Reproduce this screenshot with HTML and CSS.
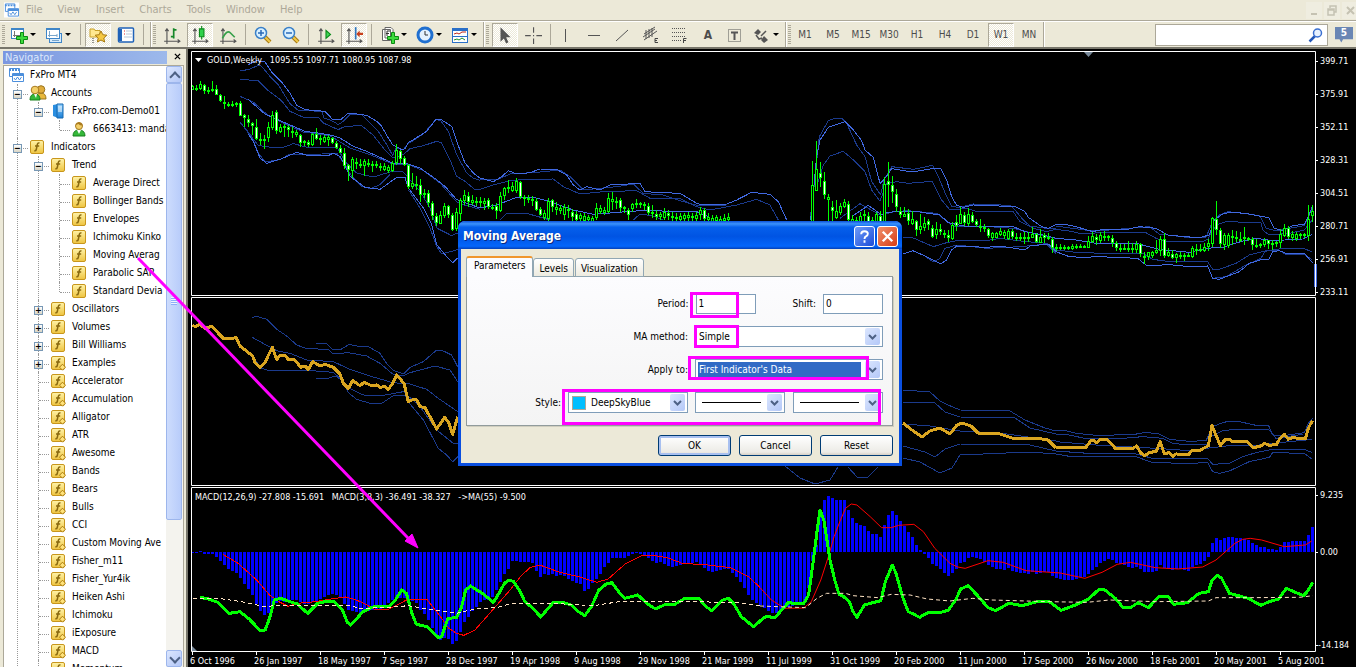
FILE: index.html
```html
<!DOCTYPE html>
<html lang="en">
<head>
<meta charset="utf-8">
<title>FxPro MT4</title>
<link rel="stylesheet" href="styles.css">
</head>
<body>
<svg class="defs" aria-hidden="true">
  <defs>
    <linearGradient id="gold" x1="0" y1="0" x2="0" y2="1"><stop offset="0" stop-color="#fff3a8"/><stop offset="1" stop-color="#eec440"/></linearGradient>
    <linearGradient id="blue" x1="0" y1="0" x2="0" y2="1"><stop offset="0" stop-color="#8fd0ff"/><stop offset="1" stop-color="#1b7fd6"/></linearGradient>
    <symbol id="fx" viewBox="0 0 16 16"><rect x="1.500" y="1.500" width="13" height="13" rx="1.500" fill="url(#gold)" stroke="#c8961c"/><path d="M10.500 4.200Q8.800 3.300 8.300 5.500L7.300 10.500Q7 12 5.300 11.700M6 7H10.200" fill="none" stroke="#8a6a10" stroke-width="1.500"/></symbol>
    <symbol id="fxc" viewBox="0 0 16 16"><use href="#fx"/><path d="M12.500 9.200l3 3-3 3-3-3z" fill="#ffe27a" stroke="#a87a10"/></symbol>
    <symbol id="app" viewBox="0 0 16 16"><path d="M1.500 1.500h10v8h-10z" fill="#fff" stroke="#4c8fdc"/><path d="M1 3h11" stroke="#4c8fdc" stroke-width="2" stroke-dasharray="2 1"/><path d="M4.500 6.500h11v8h-11z" fill="#fff" stroke="#4c8fdc"/><path d="M4 8h12" stroke="#4c8fdc" stroke-width="2"/><path d="M6 11l1.500 2 2-3 2 3 2-3" fill="none" stroke="#4c8fdc"/></symbol>
    <symbol id="man" viewBox="0 0 16 16"><path d="M2 15q0-6 6-6t6 6z" fill="#35b83a" stroke="#16801d"/><path d="M6 9h4l-2 4z" fill="#fff"/><circle cx="8" cy="5" r="3.500" fill="#f3cf68" stroke="#a87a20"/><path d="M4.500 4q1-3 4-2.500t3 3q-3 0-4-1.500z" fill="#a87a20"/></symbol>
    <symbol id="men" viewBox="0 0 18 16"><path d="M7 14q0-6 5-6t5 6z" fill="#e8b83c" stroke="#9a741c"/><circle cx="12" cy="4.500" r="3.800" fill="#e0ac3c" stroke="#9a741c"/><path d="M1 15q0-6 5-6t5 6z" fill="#35b83a" stroke="#16801d"/><path d="M5 9h3l-1 4z" fill="#fff"/><circle cx="6" cy="5" r="3.800" fill="#f3cf68" stroke="#a87a20"/></symbol>
    <symbol id="server" viewBox="0 0 16 16"><path d="M3 2l5-1v14l-5-2z" fill="#2a8ee0"/><path d="M7 1h6v14H7z" fill="url(#blue)" stroke="#1668b0"/><path d="M8 4h4M8 6h4M8 8h4" stroke="#fff"/></symbol>
    <symbol id="axes" viewBox="0 0 16 16"><path d="M3.500 2v14M1 13.500h14M2 4.500l1.500-2 1.500 2M13 12l2 1.500-2 1.500" fill="none" stroke="#555"/></symbol>
    <symbol id="plus" viewBox="0 0 16 16"><path d="M9.500 5.500h3v4h4v3h-4v4h-3v-4h-4v-3h4z" fill="#3ddb3d" stroke="#0b8a12" transform="translate(-1 -1)"/></symbol>
    <symbol id="glass" viewBox="0 0 18 18"><path d="M11 11l5 5" stroke="#a87a10" stroke-width="4"/><path d="M11 11l5 5" stroke="#f0c848" stroke-width="2"/><circle cx="7" cy="7" r="5.500" fill="#d8f0ff" stroke="#3a80c8" stroke-width="1.500"/></symbol>
  </defs>
</svg>

<header>
  <nav class="menubar" aria-label="Menu">
    <svg class="logo" viewBox="0 0 16 16"><rect width="16" height="16" fill="#fff"/><use href="#app"/></svg>
    <button>File</button><button>View</button><button>Insert</button><button>Charts</button><button>Tools</button><button>Window</button><button>Help</button>
    <div class="winbtns">
      <button aria-label="Minimize"><svg viewBox="0 0 14 16"><path d="M4 12h6" stroke="#c5c2b2" stroke-width="2"/></svg></button>
      <button aria-label="Restore"><svg viewBox="0 0 14 16"><path d="M5 6V4h6v6H9M3 7h6v6H3zM3 8h6M5 4h6" fill="none" stroke="#c5c2b2" stroke-width="1.500"/></svg></button>
      <button aria-label="Close"><svg viewBox="0 0 14 16"><path d="M4 5l7 7M11 5l-7 7" stroke="#c5c2b2" stroke-width="2"/></svg></button>
    </div>
  </nav>
  <div class="toolbars">
    <div class="toolbar">
      <button class="drop" aria-label="New chart"><svg viewBox="0 0 18 18"><rect x="1.500" y="2.500" width="12" height="10" fill="#fff" stroke="#3f86c8"/><path d="M1 3h13" stroke="#3f86c8" stroke-width="2"/><path d="M4.500 5v6M3 9.500h8" stroke="#777"/><use href="#plus" x="2" y="2" width="16" height="16"/></svg></button>
      <button class="drop" aria-label="Profiles"><svg viewBox="0 0 18 18"><rect x="4.500" y="7.500" width="12" height="9" fill="#d8ecfc" stroke="#3f86c8"/><rect x="1.500" y="2.500" width="13" height="10" fill="#fff" stroke="#3f86c8"/><path d="M1 3h14" stroke="#3f86c8" stroke-width="2"/><path d="M4.500 5v6M3 9.500h9M12 8v3M7 14.500h7" stroke="#7ba7cc"/></svg></button>
      <i class="sep"></i>
      <button class="on" aria-label="Navigator"><svg viewBox="0 0 18 18"><path d="M1 3h4l1 1.500h5V11H1z" fill="#ffe890" stroke="#c8a028"/><path d="M4 12v5" stroke="#333" stroke-dasharray="1 1"/><path d="M12 5l1.800 3.700 4 .500-3 2.800.800 4-3.600-2-3.600 2 .800-4-3-2.800 4-.500z" fill="#f5c842" stroke="#a87a10"/></svg></button>
      <button aria-label="Data window"><svg viewBox="0 0 18 18"><rect x="1.500" y="2" width="15" height="14" rx="1" fill="#fff" stroke="#1f62b8" stroke-width="1.500"/><path d="M3.500 3v12" stroke="#1f62b8" stroke-width="3"/><path d="M7 5h1M7 8h1" stroke="#d22"/><path d="M9 5h6M9 8h6M7 11h8" stroke="#b8c8d8"/></svg></button>
      <i class="sep last"></i>
    </div>
    <div class="toolbar">
      <button aria-label="Bar chart"><svg viewBox="0 0 16 16"><use href="#axes"/><path d="M9.500 2v9M9 3.500h3M7 9.500h3" stroke="#17882a" stroke-width="1.500"/></svg></button>
      <button class="on" aria-label="Candlesticks"><svg viewBox="0 0 16 16"><use href="#axes"/><path d="M9.500 0v12" stroke="#0a8a1a"/><path d="M7.500 2.500h4v7h-4z" fill="#2fd14a" stroke="#0a8a1a"/></svg></button>
      <button aria-label="Line chart"><svg viewBox="0 0 16 16"><use href="#axes"/><path d="M3 11q4-8 7-5 2 2 4 4" fill="none" stroke="#37a04a" stroke-width="1.500"/></svg></button>
      <i class="sep"></i>
      <button aria-label="Zoom in"><svg viewBox="0 0 18 18"><use href="#glass"/><path d="M4 7h6M7 4v6" stroke="#2a6ab8" stroke-width="1.500"/></svg></button>
      <button aria-label="Zoom out"><svg viewBox="0 0 18 18"><use href="#glass"/><path d="M4 7h6" stroke="#2a6ab8" stroke-width="1.500"/></svg></button>
      <i class="sep"></i>
      <button aria-label="Auto scroll"><svg viewBox="0 0 16 16"><use href="#axes"/><path d="M8 4l4 3.500L8 11z" fill="#3fd455" stroke="#0a8a1a"/></svg></button>
      <button class="on" aria-label="Chart shift"><svg viewBox="0 0 16 16"><use href="#axes"/><path d="M9.500 1v11" stroke="#2f78c0" stroke-width="1.500"/><path d="M10 7l3-3v2h3v2h-3v2z" fill="#c8401c"/></svg></button>
      <i class="sep wide"></i>
      <button class="drop" aria-label="Indicators"><svg viewBox="0 0 18 18"><path d="M1.500 3.500h8v11h-8zM4 1.500h6l2 2V12H4z" fill="#fff" stroke="#666"/><path d="M6 10V5h3M5 7.500h3" fill="none" stroke="#333"/><use href="#plus" x="2" y="2" width="16" height="16"/></svg></button>
      <button class="drop" aria-label="Periods"><svg viewBox="0 0 18 18"><circle cx="9" cy="9" r="7" fill="#e4f2ff" stroke="#1f6fd0" stroke-width="3"/><path d="M9 5v4h3" fill="none" stroke="#333"/></svg></button>
      <button class="drop" aria-label="Templates"><svg viewBox="0 0 18 18"><rect x="1.500" y="2.500" width="15" height="14" fill="#fff" stroke="#2a6fc8"/><path d="M1 3.500h16" stroke="#2a6fc8" stroke-width="3"/><path d="M1 10.500h16" stroke="#2a6fc8"/><path d="M3 8l3-1 2 1 3-2h4" fill="none" stroke="#c02818"/><path d="M3 14l3-1 2 1 3-2 3 2" fill="none" stroke="#1c9030"/></svg></button>
    </div>
    <div class="toolbar">
      <button class="on" aria-label="Cursor"><svg viewBox="0 0 16 16"><path d="M4 1v13l3-3 2 4.500 2-1L9 10h4z" fill="#555"/></svg></button>
      <button aria-label="Crosshair"><svg viewBox="0 0 16 16"><path d="M8.500 1v5M8.500 11v5M1 8.500h5M11 8.500h5M8 8.500h1" stroke="#555"/></svg></button>
      <i class="sep"></i>
      <button aria-label="Vertical line"><svg viewBox="0 0 18 18"><path d="M6.500 3v13" stroke="#555"/></svg></button>
      <button aria-label="Horizontal line"><svg viewBox="0 0 18 18"><path d="M1 9.500h12" stroke="#555"/></svg></button>
      <button aria-label="Trendline"><svg viewBox="0 0 18 18"><path d="M1 15L13 4" stroke="#555"/></svg></button>
      <button aria-label="Channel"><svg viewBox="0 0 18 18"><path d="M1 8L12 1M1 14L14 5M3 4v9M6 3v9M9 2v9M0 11l12-8" stroke="#555"/><path d="M15 12.500h-3v4h3M12 14.500h2" fill="none" stroke="#444"/></svg></button>
      <button aria-label="Fibonacci"><svg viewBox="0 0 18 18"><path d="M1 2.500h13M1 6.500h13M1 10.500h13M1 14.500h9" stroke="#555" stroke-dasharray="1 1"/><path d="M12.500 17v-4.500h3M12 14.500h3" fill="none" stroke="#444"/></svg></button>
      <button aria-label="Text"><b>A</b></button>
      <button aria-label="Text label"><svg viewBox="0 0 18 18"><rect x="1.500" y="3.500" width="12" height="12" fill="none" stroke="#555" stroke-dasharray="1 1"/><path d="M4 6.500h7M7.500 6v8" stroke="#555" stroke-width="2"/></svg></button>
      <button class="drop" aria-label="Arrows"><svg viewBox="0 0 18 18"><path d="M1 7l4-4 3 3-3 3zM8 14l3-4 4 4-4 3z" fill="#555"/><path d="M8 10l5-5M3 9l3 4 3-1" fill="none" stroke="#555" stroke-width="1.500"/></svg></button>
    </div>
    <div class="toolbar periods">
      <button>M1</button><button>M5</button><button>M15</button><button>M30</button><button>H1</button><button>H4</button><button>D1</button><button class="on">W1</button><button>MN</button>
    </div>
    <div class="search">
      <input type="search" aria-label="Search">
      <svg viewBox="0 0 16 16"><path d="M1.500 14.500L7 9" stroke="#2458b8" stroke-width="2.500"/><circle cx="9.500" cy="6" r="4" fill="#e8f2ff" stroke="#3a6fd0" stroke-width="1.500"/></svg>
      <button class="msgs">5</button>
    </div>
  </div>
</header>

<main>
  <aside class="navigator">
    <div class="navhead"><h2>Navigator</h2><button aria-label="Close navigator"><svg viewBox="0 0 8 8"><path d="M1 1l6 6M7 1L1 7" stroke="#000" stroke-width="1.500"/></svg></button></div>
    <div class="navbody">
      <ul class="tree">
        <li><span class="row"><svg><use href="#app"/></svg>FxPro MT4</span>
          <ul>
            <li><button class="tg">−</button><span class="row"><svg class="wide"><use href="#men"/></svg>Accounts</span>
              <ul><li class="end"><button class="tg">−</button><span class="row"><svg><use href="#server"/></svg>FxPro.com-Demo01</span>
                <ul><li class="end"><span class="row"><svg><use href="#man"/></svg>6663413: mandarin</span></li></ul></li></ul></li>
            <li><button class="tg">−</button><span class="row"><svg><use href="#fx"/></svg>Indicators</span>
              <ul>
                <li><button class="tg">−</button><span class="row"><svg><use href="#fx"/></svg>Trend</span>
                  <ul>
                    <li><span class="row"><svg><use href="#fx"/></svg>Average Direct</span></li>
                    <li><span class="row"><svg><use href="#fx"/></svg>Bollinger Bands</span></li>
                    <li><span class="row"><svg><use href="#fx"/></svg>Envelopes</span></li>
                    <li><span class="row"><svg><use href="#fx"/></svg>Ichimoku Kinko</span></li>
                    <li><span class="row"><svg><use href="#fx"/></svg>Moving Averag</span></li>
                    <li><span class="row"><svg><use href="#fx"/></svg>Parabolic SAR</span></li>
                    <li class="end"><span class="row"><svg><use href="#fx"/></svg>Standard Devia</span></li>
                  </ul></li>
                <li><button class="tg">+</button><span class="row"><svg><use href="#fx"/></svg>Oscillators</span></li>
                <li><button class="tg">+</button><span class="row"><svg><use href="#fx"/></svg>Volumes</span></li>
                <li><button class="tg">+</button><span class="row"><svg><use href="#fx"/></svg>Bill Williams</span></li>
                <li><button class="tg">+</button><span class="row"><svg><use href="#fxc"/></svg>Examples</span></li>
                <li><span class="row"><svg><use href="#fxc"/></svg>Accelerator</span></li>
                <li><span class="row"><svg><use href="#fxc"/></svg>Accumulation</span></li>
                <li><span class="row"><svg><use href="#fxc"/></svg>Alligator</span></li>
                <li><span class="row"><svg><use href="#fxc"/></svg>ATR</span></li>
                <li><span class="row"><svg><use href="#fxc"/></svg>Awesome</span></li>
                <li><span class="row"><svg><use href="#fxc"/></svg>Bands</span></li>
                <li><span class="row"><svg><use href="#fxc"/></svg>Bears</span></li>
                <li><span class="row"><svg><use href="#fxc"/></svg>Bulls</span></li>
                <li><span class="row"><svg><use href="#fxc"/></svg>CCI</span></li>
                <li><span class="row"><svg><use href="#fxc"/></svg>Custom Moving Ave</span></li>
                <li><span class="row"><svg><use href="#fxc"/></svg>Fisher_m11</span></li>
                <li><span class="row"><svg><use href="#fxc"/></svg>Fisher_Yur4ik</span></li>
                <li><span class="row"><svg><use href="#fxc"/></svg>Heiken Ashi</span></li>
                <li><span class="row"><svg><use href="#fxc"/></svg>Ichimoku</span></li>
                <li><span class="row"><svg><use href="#fxc"/></svg>iExposure</span></li>
                <li><span class="row"><svg><use href="#fxc"/></svg>MACD</span></li>
                <li><span class="row"><svg><use href="#fxc"/></svg>Momentum</span></li>
              </ul></li>
          </ul></li>
      </ul>
      <div class="scroll">
        <button class="chev top" aria-label="Scroll up"></button>
        <div class="track"><div class="thumb"></div></div>
        <button class="chev" aria-label="Scroll down"></button>
      </div>
    </div>
  </aside>

  <section class="workspace">
    <svg class="chart" viewBox="190 50 1166 617" preserveAspectRatio="xMinYMin meet">
      <g class="lines" transform="translate(190 48) scale(.33333)">
        <polyline class="dim" points="150,68 175,65 205,52 215,55 240,85 265,110 280,135 300,167 325,187 395,190 402,210 430,220 445,230 460,220 480,200 515,200 540,225 565,250 590,290 608,322 618,300 640,305 655,287 700,258 738,214 752,218 775,250 800,320 830,375 850,390 870,397"/>
        <polyline class="dim" points="150,94 205,98 235,128 265,150 280,165 300,190 345,210 385,208 400,225 445,245 465,235 515,233 550,262 580,300 608,330 640,320 660,302 700,293 740,280 755,285 780,335 800,385 825,400 855,425 870,426"/>
        <polyline class="dim" points="150,145 190,162 235,203 290,230 340,252 420,263 480,300 540,320 608,348 655,350 700,368 750,405 800,462 820,470 870,484"/>
        <polyline class="dim" points="150,222 175,255 205,292 235,297 280,298 310,287 360,300 440,297 465,340 500,375 550,387 600,372 640,372 690,430 720,480 740,540 785,563 803,555"/>
        <polyline class="dim" points="165,240 185,265 205,315 225,342 270,335 300,318 350,321 440,315 465,350 485,385 515,415 540,422 570,410 600,380"/>
        <polyline class="dim" points="655,425 690,480 720,540 740,595 755,618 803,605"/>
        <polyline class="brt" points="174,50 200,38 225,42 245,72 275,102 300,135 320,172 345,185 405,190 415,200 428,215 452,215 475,195 500,198 530,202 560,220 575,235 590,262 608,290 620,296 635,305 645,302 655,283 670,275 710,250 738,214 755,216 785,235 800,280 825,345 850,375 870,390"/>
        <polyline class="brt" points="175,155 225,198 270,218 345,250 390,256 425,262 450,270 490,295 530,310 570,328 608,346 655,348 690,360 740,395 765,415 800,455 870,480"/>
        <polyline class="brt" points="175,258 190,280 210,330 230,346 275,332 320,313 355,323 415,323 430,315 450,325 480,385 525,418 570,424 590,410 620,388 645,388 655,420 700,480 725,530 740,590 765,620 788,645 803,630"/>
      </g>
      <g class="lines" transform="translate(450 160) scale(.33333)">
        <polyline class="dim" points="90,60 140,60 180,42 260,37 330,30 360,50 400,90 500,80 550,72 580,100 640,105 700,125 750,138 830,135"/>
        <polyline class="dim" points="90,88 130,75 180,62 230,58 310,57 340,80 390,102 460,95 560,92 600,115 690,115 740,140 780,150 860,135 920,118 960,135 985,180"/>
        <polyline class="dim" points="150,180 170,160 230,160 300,180"/>
        <polyline class="dim" points="550,180 570,162 610,168 640,180"/>
        <polyline class="brt" points="90,54 130,65 155,50 175,32 200,42 240,38 270,27 320,28 350,45 370,75 390,90 410,80 450,90 480,75 570,70 585,95 640,98 690,100 740,130 760,135 830,132 860,120 905,97 960,103 985,125 1010,180"/>
        <polyline class="brt" points="90,144 140,135 200,112 250,112 300,125 370,150 430,163 530,155 600,150 660,155 740,155 780,172"/>
      </g>
      <g class="lines" transform="translate(780 100) scale(.33333)">
        <polyline class="dim" points="90,360 100,280 107,210 118,110 145,62 165,55 185,55 200,70 230,135 255,170 275,245 302,285 312,240 335,200 400,208 440,200 457,195 475,230 500,290 515,320 540,322 580,312 690,316 705,330 730,360 750,378 800,385 828,384"/>
        <polyline class="dim" points="110,260 130,195 150,168 190,154 220,180 255,215 275,270 300,303 320,250 350,245 385,250 457,244 485,300 510,330 560,325 590,335 700,335 720,365 760,385 800,395 828,388"/>
        <polyline class="dim" points="180,355 240,311 300,345 340,336 380,332 470,340 520,380 600,378 700,385 760,400 828,415"/>
        <polyline class="dim" points="370,412 400,414 460,440 500,428 530,422 620,422 660,415 740,425 800,430 828,450"/>
        <polyline class="dim" points="430,465 460,486 480,475 495,445 530,435 620,445 720,440 800,432 828,460"/>
        <polyline class="brt" points="92,360 110,170 120,120 145,82 195,65 220,90 245,122 255,150 280,172 300,250 315,235 335,206 395,216 455,206 482,204 500,240 515,290 530,316 550,322 580,315 705,320 735,335 745,352 785,380 805,385 828,373"/>
        <polyline class="brt" points="215,350 265,316 305,345 320,337 350,335 405,334 480,345 505,368 560,380 600,380 700,380 735,395 790,405 828,415"/>
        <polyline class="brt" points="370,462 398,452 440,470 482,492 500,480 515,450 530,438 620,442 660,438 735,450 750,438 805,432 828,455"/>
      </g>
      <g class="lines" transform="translate(1056 170) scale(.33333)">
        <polyline class="dim" points="0,168 50,175 110,183 160,180 280,170 310,192 400,203 450,202 470,155 490,135 515,125 560,130 612,137 630,175 660,182 745,167 769,115"/>
        <polyline class="dim" points="0,178 40,183 80,192 130,188 270,188 300,205 335,215 440,215 455,208 480,165 510,155 615,158 620,180 640,195 700,190 745,180 769,150"/>
        <polyline class="dim" points="0,240 60,247 140,250 260,250 290,268 340,275 455,275 470,298 490,298 540,280 580,255 620,245 680,235 740,235 769,245"/>
        <polyline class="dim" points="470,325 510,320 570,285 615,265 630,240 670,242 690,253 745,253 769,270"/>
        <polyline class="brt" points="0,163 25,163 60,170 110,185 140,178 215,178 250,170 300,175 335,195 385,200 430,203 460,195 475,150 500,132 520,127 570,130 620,140 638,143 655,175 680,182 710,167 745,163 757,140 769,110"/>
        <polyline class="brt" points="0,205 60,210 120,220 190,222 240,220 310,238 400,247 450,235 500,232 560,213 600,205 650,212 740,207 769,193"/>
        <polyline class="brt" points="0,245 40,260 80,262 130,260 245,265 270,285 300,288 330,283 400,290 455,288 470,325 490,328 550,305 580,280 620,268 638,268 650,245 670,242 690,250 745,250 769,278"/>
        <polyline class="dim" points="0,782 30,782 60,790 120,796 230,794 265,788 305,790 340,808 400,814 450,812 470,770 490,762 515,754 555,756 600,766 638,767 650,795 675,798 745,788 757,760 769,745"/>
        <polyline class="dim" points="0,793 40,795 90,806 200,805 260,800 320,805 350,820 400,825 455,822 465,800 500,782 540,778 640,780 660,805 740,793"/>
        <polyline class="dim" points="0,815 120,825 300,835 400,842 450,835 520,827 600,826 700,815 769,808"/>
        <polyline class="dim" points="0,843 80,849 240,852 290,865 400,867 455,865 470,883 520,880 560,860 600,848 650,838 745,838 769,848"/>
        <polyline class="dim" points="0,852 40,859 240,860 290,878 400,880 455,878 470,905 490,910 520,903 580,875 640,862 650,848 745,850 769,868"/>
        <polyline class="goldline" points="0,834 90,832 105,812 115,812 122,818 133,808 155,810 180,837 230,835 242,828 255,850 267,857 280,847 300,845 313,815 325,852 338,848 351,859 360,852 398,853 410,840 430,842 457,827 468,767 493,827 508,808 520,808 530,815 570,813 592,832 612,830 625,820 640,826 662,823 672,805 685,793 697,808 710,803 748,807 757,775 769,752"/>
      </g>
      <g class="lines">
        <polyline class="dim" points="903,390 930,392 940,401 948,405 960,410 1010,411 1025,420 1045,428 1056,431"/>
        <polyline class="dim" points="903,402 935,403 945,412 960,417 1015,418 1030,428 1056,434"/>
        <polyline class="dim" points="903,424 930,426 960,431 1000,433 1056,441"/>
        <polyline class="dim" points="903,446 925,452 935,457 945,449 960,444 1030,445 1056,451"/>
        <polyline class="dim" points="903,458 920,462 940,473 952,468 960,455 1030,452 1056,454"/>
        <polyline class="dim" points="785,466 800,478 815,484 830,480 838,467"/><polyline class="dim" points="848,467 858,478 868,477 878,467"/>
        <polyline class="goldline" points="903,423 912,430 922,437 930,431 940,428 950,434 957,425 962,423 971,426 978,433 1000,434 1012,438 1036,438 1048,440 1056,448"/>
      </g>
      <g class="lines" transform="translate(190 300) scale(.33333)">
        <polyline class="dim" points="187,52 200,49 230,58 260,88 290,108 320,135 350,146 415,148 430,162 475,158 530,168 570,190 608,222 640,228 660,218 735,198 780,210 803,245"/>
        <polyline class="dim" points="378,130 410,130 428,150 450,150 478,133 500,138 535,140 570,160 590,190 608,210 640,222 660,202 700,185 738,152 760,153 785,165 803,200"/>
        <polyline class="dim" points="187,112 210,125 260,152 300,160 350,180 430,185 480,208 540,228 608,248 660,252 710,268 745,295 803,335"/>
        <polyline class="dim" points="187,170 215,205 240,213 340,210 430,217 455,240 480,265 520,285 575,287 640,275 690,320 740,390 790,430 803,430"/>
        <polyline class="dim" points="378,235 415,235 435,228 455,240 475,278 500,298 540,310 575,310 610,287 645,285 660,312 700,360 745,445 770,465 788,485 803,470"/>
        <polyline class="goldline" points="7,77 18,79 28,73 45,85 65,79 100,115 130,115 138,112 150,138 188,168 195,187 210,202 225,187 247,142 260,178 270,167 285,167 295,178 315,180 332,202 345,198 355,208 368,185 390,198 405,193 430,202 450,222 460,250 475,265 488,242 510,257 522,247 545,257 560,255 572,263 582,258 595,268 608,250 620,225 642,250 655,305 670,298 680,300 690,320 705,323 740,387 764,352 776,368 788,403 803,350"/>
      </g>
      <g id="candles"></g>
      <g id="histogram"></g>
      <g class="lines" transform="translate(190 485) scale(.37 .33333)">
        <polyline class="signal" points="90,209 130,235 180,285 215,330 240,350 265,364 290,355 340,350 380,342 420,336 445,343 470,355 500,374 535,374 560,360 590,342 640,343 665,378 700,430 720,445 740,451 770,435 810,385 865,315 895,272 920,247 945,240 1000,262 1050,275 1100,292 1130,282 1175,238 1220,212 1250,211 1290,218 1330,235 1400,240 1460,248 1510,275 1541,308"/>
        <polyline class="fast" points="27,337 50,342 75,352 105,385 120,383 135,380 160,402 190,437 203,435 215,400 228,345 245,340 270,350 290,357 318,385 345,355 365,350 390,350 412,375 425,412 434,420 450,402 465,382 485,370 500,364 540,363 555,345 572,315 585,325 600,385 612,418 640,425 655,440 672,458 680,455 697,400 720,398 733,370 745,315 758,303 790,325 820,352 835,325 850,295 862,285 875,290 890,315 905,350 925,368 948,396 982,352 1010,353 1030,360 1050,380 1067,392 1085,365 1105,315 1125,297 1140,293 1160,322 1175,340 1210,330 1235,355 1258,372 1285,358 1310,358 1338,340 1375,340 1395,365 1410,377 1440,345 1455,340 1470,357 1490,395 1523,425 1541,408"/>
        <polyline class="avg" points="7,340 90,342 150,352 200,365 250,360 340,362 430,362 460,370 530,368 590,362 640,372 720,385 770,372 830,368 870,355 1010,357 1090,362 1160,350 1280,348 1400,351 1480,353 1541,363"/>
      </g>
      <g class="lines" transform="translate(760 485) scale(.38 .33333)">
        <polyline class="signal" points="0,308 30,345 65,370 115,369 135,350 160,285 180,215 195,155 210,110 225,70 240,57 255,60 290,95 320,128 345,128 365,121 405,118 430,140 460,190 500,235 520,246 540,250 600,227 640,232 700,257 790,264 855,280 900,262 940,238 975,232 1040,248 1100,252 1165,246 1200,225 1250,175 1270,163 1290,160 1320,165 1380,185 1435,180 1452,168"/>
        <polyline class="fast" points="0,408 15,395 40,397 75,352 95,357 115,355 128,330 140,230 150,140 158,75 168,105 185,230 198,290 208,328 220,335 235,350 245,380 255,397 275,360 290,355 318,347 330,290 348,240 358,265 375,335 390,380 405,388 420,397 443,382 475,382 495,376 515,345 528,312 548,302 575,335 600,368 620,377 655,355 690,362 730,350 762,350 792,376 830,360 865,342 890,315 905,313 935,340 955,367 975,368 995,353 1022,368 1050,335 1075,335 1088,358 1125,353 1155,325 1180,320 1190,285 1203,270 1215,280 1235,325 1285,340 1318,361 1340,350 1365,342 1385,310 1405,320 1430,332 1440,320 1455,292"/>
        <polyline class="avg" points="0,363 120,368 150,340 175,325 225,325 245,332 310,338 345,328 395,330 440,342 500,348 560,340 610,345 760,350 860,352 920,345 1040,350 1180,348 1200,338 1290,338 1420,337 1455,332"/>
      </g>
      <path class="frame" d="M191.500 51.500H1315.500V295.500H191.500zM191.500 297.500H1315.500V485.500H191.500zM191.500 487.500H1315.500V651.500H191.500z"/>
      <path d="M1315.500 264v23" stroke="#4169e1" stroke-width="3"/><path d="M1315.500 264v23" stroke="#fff"/>
      <path d="M1084 52h9l-4.500 5z" fill="#778899"/><path d="M192 646l5 5h-5z" fill="#778899"/><path d="M195 58h7l-3.500 4z" fill="#fff"/>
      <g id="axis"></g>
      <text x="207" y="63">GOLD,Weekly&#160;&#160;&#160;1095.55 1097.71 1080.95 1087.98</text>
      <text x="195" y="500">MACD(12,26,9) -27.808 -15.691&#160;&#160;&#160;MACD(3,8,3) -36.491 -38.327&#160;&#160;&#160;-&gt;MA(55) -9.500</text>
    </svg>

    <form class="dialog" role="dialog" aria-label="Moving Average">
      <div class="titlebar"><h1>Moving Average</h1>
        <button type="button" class="help" aria-label="Help"><svg viewBox="0 0 20 20"><path d="M6.500 7.500q0-3 3.500-3t3.500 2.700q0 1.800-2 2.600-1.500.700-1.500 2.700M10 14v2.500" fill="none" stroke="#fff" stroke-width="2"/></svg></button>
        <button type="button" class="close" aria-label="Close"><svg viewBox="0 0 20 20"><path d="M5 5l10 10M15 5L5 15" stroke="#fff" stroke-width="2.500"/></svg></button>
      </div>
      <div class="body">
        <div class="tabs" role="tablist"><button type="button" role="tab" class="active">Parameters</button><button type="button" role="tab">Levels</button><button type="button" role="tab">Visualization</button></div>
        <div class="panel">
          <div class="field"><label for="period">Period:</label><input id="period" value="1"><label class="shift" for="shift">Shift:</label><input id="shift" value="0"></div>
          <div class="field"><label for="method">MA method:</label><span class="sel long"><select id="method"><option>Simple</option></select></span></div>
          <div class="field"><label for="apply">Apply to:</label><span class="sel long picked"><select id="apply"><option>First Indicator's Data</option></select></span></div>
          <div class="field"><label for="color">Style:</label><span class="sel color"><i></i><select id="color"><option>DeepSkyBlue</option></select></span><span class="sel line"><select aria-label="Line style"><option></option></select></span><span class="sel line"><select aria-label="Line width"><option></option></select></span></div>
          <div class="mark period"></div><div class="mark method"></div><div class="mark apply"></div><div class="mark style"></div>
        </div>
        <div class="actions"><button type="button" class="default">OK</button><button type="button">Cancel</button><button type="button">Reset</button></div>
      </div>
    </form>
  </section>
  <svg class="arrow" viewBox="0 0 290 300"><path d="M4 4L274 284" stroke="#f0f" stroke-width="3"/><path d="M284 294l-13-7 7-7z" fill="#f0f" stroke="#f0f"/></svg>
</main>
<script src="chart.js"></script>
</body>
</html>
```
FILE: styles.css
```css
* { box-sizing: border-box; }
body { margin: 0; height: 100vh; display: flex; flex-direction: column; overflow: hidden; background: #ece9d8; color: #000; font: 10px/12px "DejaVu Sans Condensed", "Liberation Sans", sans-serif; }
button, input, select { font: inherit; color: inherit; margin: 0; padding: 0; border: 0; background: none; }
h1, h2 { margin: 0; font-size: inherit; }
.defs { position: absolute; width: 0; height: 0; }
header { flex: none; }

.menubar { display: flex; align-items: center; height: 20px; padding-left: 4px; color: #aca899; font-size: 11px; }
.logo { width: 15px; height: 16px; margin-right: 3px; }
.menubar > button { margin: 0 7px 0 0; padding: 0 4px; }
.winbtns { display: flex; margin-left: auto; gap: 2px; margin-right: -2px; }
.winbtns button { width: 16px; height: 17px; background: #efede0; }
.winbtns svg { width: 14px; height: 16px; }

.toolbars { display: flex; height: 29px; border-top: 1px solid #aca899; border-bottom: 2px solid #77756a; background: #ece9d8; box-shadow: inset 0 1px #fff; padding-top: 1px; }
.toolbar { display: flex; align-items: center; position: relative; padding-left: 7px; border-right: 1px solid #aca899; box-shadow: 1px 0 #fff; }
.toolbar::before { content: ""; position: absolute; left: 2px; top: 3px; bottom: 3px; width: 3px; background: repeating-linear-gradient(#aca899 0 1px, transparent 1px 2px); }
.toolbar button { width: 28px; height: 24px; display: flex; align-items: center; justify-content: center; flex: none; color: #4c4c4c; }
.toolbar.periods { padding-left: 5px; }
.toolbar svg { width: 18px; height: 18px; }
.toolbar b { font-size: 12px; }
.toolbar .drop { width: 35px; justify-content: flex-start; padding-left: 3px; gap: 2px; }
.toolbar .drop::after { content: ""; border: 3px solid transparent; border-top-color: #000; border-bottom: 0; }
.toolbar .on { width: 26px; margin: 0 1px; background: repeating-conic-gradient(#fff 0 25%, #ece9d8 0 50%) 0 0 / 2px 2px; border: 1px solid; border-color: #aca899 #fff #fff #aca899; }
.sep { width: 7px; height: 21px; flex: none; background: linear-gradient(#aca899, #aca899) 3px 0 / 1px 100% no-repeat; }
.sep.wide, .sep.last { width: 10px; }
.search { flex: none; margin-left: auto; display: flex; align-items: center; }
.search input { width: 173px; height: 22px; background: #fff; border: 1px solid #aca899; }
.search svg { width: 16px; height: 16px; margin-left: -20px; }
.msgs { margin: 0 3px 0 11px; width: 18px; height: 16px; padding-bottom: 3px; background: #6a86b4; color: #fff; font-weight: bold; clip-path: polygon(0 0, 100% 0, 100% 80%, 45% 80%, 35% 100%, 25% 80%, 0 80%); }

main { flex: 1; min-height: 0; display: flex; position: relative; }
.navigator { width: 188px; flex: none; display: flex; flex-direction: column; padding: 1px 2px 0 3px; border-right: 2px solid #77756a; }
.navhead { display: flex; align-items: center; height: 14px; gap: 3px; margin-bottom: 1px; }
.navhead h2 { flex: 1; font-weight: normal; font-size: 11px; line-height: 13px; padding-left: 2px; color: #dce8fc; background: linear-gradient(90deg, #7b97e0, #9db9eb); }
.navhead button { width: 14px; }
.navhead svg { width: 7px; height: 7px; }
.navbody { flex: 1; min-height: 0; display: flex; background: #fff; border: 1px solid #aca899; border-bottom: 0; }
.tree, .tree ul { list-style: none; margin: 0; padding: 0; }
.tree { flex: 1; overflow: hidden; padding-left: 5px; }
.tree li { position: relative; }
.tree li li { padding-left: 21px; }
.tree li li::before { content: ""; position: absolute; left: 8px; top: 0; bottom: 0; border-left: 1px dotted #999; }
.tree li li::after { content: ""; position: absolute; left: 9px; top: 10px; width: 10px; border-top: 1px dotted #999; }
.tree li li.end::before { bottom: auto; height: 10px; }
.row { display: flex; align-items: center; height: 18px; gap: 5px; white-space: nowrap; }
.row svg { width: 16px; height: 16px; flex: none; margin: 0 1px 0 -1px; }
.row svg.wide { width: 18px; margin-right: -1px; }
.tg { position: absolute; z-index: 1; left: 4px; top: 6px; width: 9px; height: 9px; border: 1px solid #7898b5; background: linear-gradient(#fff, #d8d4c4); font-size: 9px; line-height: 7px; font-weight: bold; display: flex; align-items: center; justify-content: center; }
.scroll { width: 17px; flex: none; display: flex; flex-direction: column; background: #f4f3ee; }
.chev { position: relative; height: 17px; width: 16px; flex: none; border: 1px solid #9db6ec; border-radius: 2px; background: linear-gradient(135deg, #dbe6fe, #b4c8f8); }
.chev::after { content: ""; position: absolute; left: 4px; top: 3px; width: 6px; height: 6px; border: solid #4d6185; border-width: 0 2px 2px 0; transform: rotate(45deg); }
.chev.top::after { top: 6px; transform: rotate(225deg); }
.track { flex: 1; }
.thumb { height: 77%; width: 16px; border: 1px solid #9db6ec; border-radius: 2px; background: repeating-linear-gradient(#eef4fe 0 1px, #8cb0f8 1px 2px) center / 6px 8px no-repeat, linear-gradient(90deg, #cddcfd, #b8ccfa); }

.workspace { flex: 1; min-width: 0; position: relative; background: #000; padding: 1px 0 0 2px; }
.chart { display: block; width: 100%; height: 100%; }
.chart text { fill: #fff; font-size: 9px; }
.frame { fill: none; stroke: #fff; }
.lines polyline { fill: none; vector-effect: non-scaling-stroke; shape-rendering: crispEdges; stroke-linejoin: round; }
.lines .dim { stroke: #1b3a8c; }
.lines .brt { stroke: #4169e1; }
.lines .goldline { stroke: #daa520; stroke-width: 3px; }
.lines .signal { stroke: #f00; }
.lines .fast { stroke: #0f0; stroke-width: 3px; }
.lines .avg { stroke: #ffe4c4; stroke-dasharray: 4 3; }
#candles, #histogram { shape-rendering: crispEdges; }
.rise { fill: #000; stroke: #0f0; }
.fall { fill: #fff; stroke: #0f0; }
.wick { stroke: #0f0; }

.dialog { position: absolute; left: 270px; top: 172px; width: 444px; background: #ece9d8; border: solid #0a4fe0; border-width: 0 3px 3px; border-radius: 7px 7px 0 0; }
.titlebar { display: flex; align-items: center; gap: 2px; height: 28px; margin: 0 -3px; padding: 2px 4px 0 5px; border-radius: 7px 7px 0 0; color: #fff; background: linear-gradient(#0a50d8, #3b92fb 10%, #0560ec 22%, #0054e3 55%, #0466fb 90%, #0440b8); }
.titlebar h1 { flex: 1; font-size: 12px; text-shadow: 1px 1px #0a2a80; }
.titlebar button { width: 21px; height: 21px; border: 1px solid #fff; border-radius: 3px; background: linear-gradient(135deg, #6f9cf8, #1c4cd8); }
.titlebar .close { background: linear-gradient(135deg, #f0906c, #d83c14); }
.titlebar svg { display: block; width: 19px; height: 19px; }
.body { padding: 7px 6px 7px 5px; }
.tabs { display: flex; align-items: flex-end; height: 21px; margin-bottom: -1px; position: relative; z-index: 1; }
.tabs button { height: 19px; padding: 2px 5px 0; border: 1px solid #91a7b4; border-radius: 3px 3px 0 0; background: linear-gradient(#fff, #edebe0); margin-right: 1px; }
.tabs .active { height: 21px; padding: 0 7px 3px; border-top: 2px solid #f0962c; border-bottom: 0; background: #fcfcfe; margin-right: 0; }
.panel { position: relative; height: 150px; display: flex; flex-direction: column; gap: 12px; padding: 16px 9px 0; border: 1px solid #919b9c; background: linear-gradient(#fcfcfe, #f4f4f4); box-shadow: 1px 1px #d0cebf; }
.field { display: flex; justify-content: flex-end; align-items: center; gap: 7px; height: 21px; }
.field input { width: 60px; height: 20px; border: 1px solid #7f9db9; background: #fff; padding: 0 2px; }
.shift { margin-left: 30px; }
.sel { position: relative; display: flex; align-items: center; height: 21px; padding: 2px; border: 1px solid #7f9db9; background: #fff; }
.sel select { flex: 1; height: 17px; appearance: none; padding: 0 1px; }
.sel::after { content: ""; width: 15px; height: 17px; border-radius: 2px; flex: none; background: url("data:image/svg+xml,%3Csvg xmlns='http://www.w3.org/2000/svg' viewBox='0 0 15 17'%3E%3Cpath d='M4 7l3.500 3.500L11 7' fill='none' stroke='%234d6185' stroke-width='2'/%3E%3C/svg%3E"), linear-gradient(135deg, #dbe6fe, #b4c8f8); }
.long { width: 188px; }
.picked select { background: #316ac5; color: #fff; margin-right: 4px; height: 16px; }
.color { width: 120px; }
.color i { width: 14px; height: 14px; margin: 0 4px 0 1px; background: #00bfff; border: 1px solid #aca899; }
.line { width: 90px; }
.line + .line { margin-left: 1px; }
.line select { min-width: 0; background: linear-gradient(#000, #000) 4px 8px / 59px 1px no-repeat; }
.mark { position: absolute; border: 3px solid #f0f; pointer-events: none; }
.mark.period { left: 223px; top: 15px; width: 49px; height: 26px; }
.mark.method { left: 227px; top: 48px; width: 45px; height: 23px; }
.mark.apply { left: 221px; top: 79px; width: 181px; height: 24px; }
.mark.style { left: 95px; top: 112px; width: 319px; height: 36px; }
.actions { display: flex; justify-content: flex-end; gap: 8px; padding-top: 9px; }
.actions button { width: 73px; height: 21px; border: 1px solid #003c74; border-radius: 3px; background: linear-gradient(#fff, #ecebe6 85%, #d6d0c5); }
.actions .default { box-shadow: inset 0 0 0 2px #a8c0f0; }

.arrow { position: absolute; left: 134px; top: 205px; width: 290px; height: 300px; pointer-events: none; }
```
FILE: chart.js
```js
// Candle segments: first bar, base y, then "high top bottom low" per bar in
// thirds of a pixel below the base. A trailing "f" marks a falling week.
const SEGMENTS = [
  [0, 48, "110 115 125 127,112 120 122 128,100 108 122 125,108 110 130 137f,118 127 133 137,98 122 124 131,112 123 140 142f,138 140 158 162f,145 161 168 182f,162 168 170 177,160 168 173 176,162 165 170 177,160 165 203 205f,197 202 209 238f,202 214 226 236f,222 225 235 262f,214 236 272 275f,255 273 280 292f,260 272 278 304,222 238 271 283,188 202 240 245,187 193 249 257f,228 237 253 256,228 234 238 268,231 237 247 266f,236 248 254 270,247 253 260 268,257 262 284 298f,276 280 285 294,277 281 291 296f,256 257 290 294,240 257 272 276f,261 270 274 291,260 268 282 286,261 268 275 293,267 270 284 289f,278 286 301 303f,290 301 314 316f,299 314 353 363f,347 350 366 398f,327 333 370 390,330 341 346 363,334 347 352 360,333 339 353 383,333 344 350 357,338 349 354 372,340 348 350 359,344 354 361 369,344 354 365 370,350 358 368 374,338 344 370 372,288 307 345 350,307 310 332 348f,325 330 350 355f,348 350 416 422f,375 406 418 424,385 408 414 426,392 410 440 461f,424 436 442 450,425 435 465 478f,460 465 503 515f,495 503 526 535f,489 500 527 528,465 474 503 510,470 474 502 510f,495 502 545 549f,480 492 542 550,451 456 497 520,427 442 460 470,433 445 463 478f,440 457 464 470,448 459 465 473"],
  [72, 160, "110 122 130 140,113 122 132 150,115 120 142 147f,133 140 143 150,130 138 152 178f,97 108 152 155,80 83 108 120,60 82 86 100,65 78 93 96,55 64 92 100,62 65 110 118f,105 112 118 138,105 115 120 130,108 116 124 138,115 122 150 153f,142 147 164 168f,150 158 175 180,115 122 178 185,117 120 140 155f,125 140 150 165,135 145 152 162,132 140 165 180,135 148 152 175,148 155 170 182f,152 163 180 190f,160 165 176 190,158 168 182 190,165 172 180 195,168 175 190 195,130 143 175 180,135 145 155 163,140 150 158 165,100 115 155 160,95 118 125 150,110 122 130 148,115 120 145 155f,138 142 148 160,145 150 165 180f,128 133 148 155,118 128 135 145,125 130 135 145,125 133 138 150,130 138 158 165f,135 155 160 175,150 162 170 180f,155 162 170 180,145 155 175 180,150 158 168 180f,155 168 175 185,160 172 178 190,160 168 180 190,158 165 178 185,155 165 175 190,160 168 175 185,155 165 178 190,140 150 165 180,145 150 178 190f,160 170 180 190,165 175 185 190,165 172 182 190,168 176 186 190,162 175 182 190,160 172 180 190"],
  [155, 100, "183 256 400 450,123 208 272 272,186 218 234 260f,215 244 285 298f,282 291 299 400,303 320 334 380f,300 333 354 358,310 317 338 345,297 306 322 325,303 312 360 370f,345 358 365 370,352 360 366 370,337 348 370 375,330 342 349 370,335 347 370 375f,350 360 370 375,335 343 370 375,333 347 370 375f,232 253 365 370,186 243 255 322f,228 255 275 310f,268 282 322 335f,320 333 345 354f,322 342 350 350,328 338 362 375f,332 358 371 374,360 363 391 408f,341 378 389 402,350 369 385 392,357 363 376 390f,375 384 410 414f,365 388 405 417,373 388 397 405f,390 399 404 414,390 405 414 427f,366 375 416 420,345 366 377 392f,320 341 372 372,335 345 368 377f,324 342 372 378,337 345 366 370f,358 364 375 380f,358 377 382 396,373 380 388 397,385 387 408 415f,395 400 413 424,396 399 413 415,384 393 404 407,391 396 407 418,387 394 417 419,387 394 411 417f,400 410 412 422,399 411 413 423,396 411 413 431,397 411 414 425,381 402 414 415,400 402 425 428f,387 411 429 430,399 406 414 428f,400 411 413 420,412 416 445 458f"],
  [216, 170, "222 230 236 242,222 231 234 240,225 231 236 241,228 231 237 240,223 229 236 240,222 229 235 238,222 228 231 234,225 229 231 234,198 214 233 234,185 199 216 220,193 200 209 225f,186 196 213 220,183 197 201 213,194 199 203 213,196 204 220 230f,213 220 235 242f,222 234 238 246,221 235 237 240,213 235 240 246,220 235 241 248,213 222 241 248,220 223 252 260f,245 257 260 282,245 247 260 271,244 247 259 264,210 241 250 252,198 207 243 257,188 206 257 263f,234 245 257 262,240 253 263 268f,250 253 263 278,247 254 261 266,248 256 258 273,250 255 257 262,228 235 261 265,222 237 239 255,222 237 239 245,219 230 242 246,208 219 231 242,140 143 223 230,93 147 180 195f,174 181 222 235f,188 196 226 240,190 196 227 233,180 199 204 224,183 200 207 215,186 206 210 216,171 202 207 226,201 205 207 212,202 207 226 240f,207 224 227 234,218 222 228 234,203 210 226 232,209 211 223 237f,210 218 222 240,212 217 222 232,178 193 220 233,163 175 198 200,168 175 200 207f,183 193 205 213,185 193 206 212,188 192 199 207,188 193 198 204,105 148 199 212,105 124 138 157"]
];

// MACD bar ends, in thirds of a pixel below y = 485; the zero line sits at 201.
const MACD = [203,203,198,207,207,207,215,228,240,252,258,264,279,297,311,330,358,378,390,384,365,355,348,352,350,345,345,352,357,358,350,347,342,335,330,327,330,338,358,375,378,380,384,380,378,375,373,372,365,355,345,340,338,340,342,348,355,375,387,405,430,455,464,458,461,477,467,440,411,395,377,366,352,345,345,335,315,290,267,252,228,227,230,231,232,234,258,276,268,270,267,273,270,274,281,287,294,297,318,312,295,282,267,246,234,220,219,219,219,213,207,204,207,213,220,228,234,232,237,243,246,243,240,238,238,235,231,237,248,257,261,258,256,252,252,264,276,291,309,330,345,355,360,368,378,384,384,378,370,365,362,360,355,347,310,228,180,90,45,33,39,45,45,45,75,100,114,120,123,138,147,147,156,120,90,78,90,108,123,141,156,180,195,206,218,237,243,252,264,273,264,252,233,231,218,215,219,222,230,240,246,252,252,255,250,258,261,264,264,267,261,267,264,262,262,273,279,282,285,285,285,282,276,276,267,255,246,234,228,222,225,234,237,240,246,249,246,252,261,261,261,258,240,250,252,255,252,252,255,258,246,240,237,228,215,174,159,165,159,156,156,159,159,162,165,174,180,186,186,192,192,196,186,171,171,168,168,168,168,150,126];

const candles = [];
for (const [first, base, data] of SEGMENTS) {
  data.split(",").forEach((bar, n) => {
    const [high, top, bottom, low] = bar.split(" ").map(v => base + Math.round(parseInt(v, 10) / 3));
    const x = 192 + 4 * (first + n);
    const kind = bar.endsWith("f") ? "fall" : "rise";
    candles.push(`<path class="wick" d="M${x + 0.5} ${high}V${low}"/><rect class="${kind}" x="${x - 0.5}" y="${top + 0.5}" width="2" height="${Math.max(bottom - top - 1, 1)}"/>`);
  });
}
document.getElementById("candles").innerHTML = candles.join("");

document.getElementById("histogram").innerHTML = MACD.map((v, i) => {
  const end = 485 + Math.round(v / 3);
  const y = Math.min(552, end);
  return `<rect x="${191 + 4 * i}" y="${y}" width="3" height="${Math.max(Math.abs(end - 552), 1)}" fill="#00f"/>`;
}).join("");

const DATES = ["6 Oct 1996", "26 Jan 1997", "18 May 1997", "7 Sep 1997", "28 Dec 1997", "19 Apr 1998", "9 Aug 1998", "29 Nov 1998", "21 Mar 1999", "11 Jul 1999", "31 Oct 1999", "20 Feb 2000", "11 Jun 2000", "17 Sep 2000", "26 Nov 2000", "18 Feb 2001", "20 May 2001", "5 Aug 2001"];
const PRICES = [["399.71", 61], ["375.91", 94], ["352.11", 127], ["328.31", 160], ["304.51", 193], ["280.71", 226], ["256.91", 259], ["233.11", 292], ["9.235", 495], ["0.00", 552], ["-14.184", 645]];
document.getElementById("axis").innerHTML =
  DATES.map((d, i) => `<path class="frame" d="M${192.5 + 64 * i} 652v3"/><text x="${190 + 64 * i}" y="664">${d}</text>`).join("") +
  PRICES.map(([p, y]) => `<path class="frame" d="M1316 ${y + 0.5}h2"/><text x="${p[0] === "-" ? 1318 : 1320}" y="${y + 3}">${p}</text>`).join("");
```
